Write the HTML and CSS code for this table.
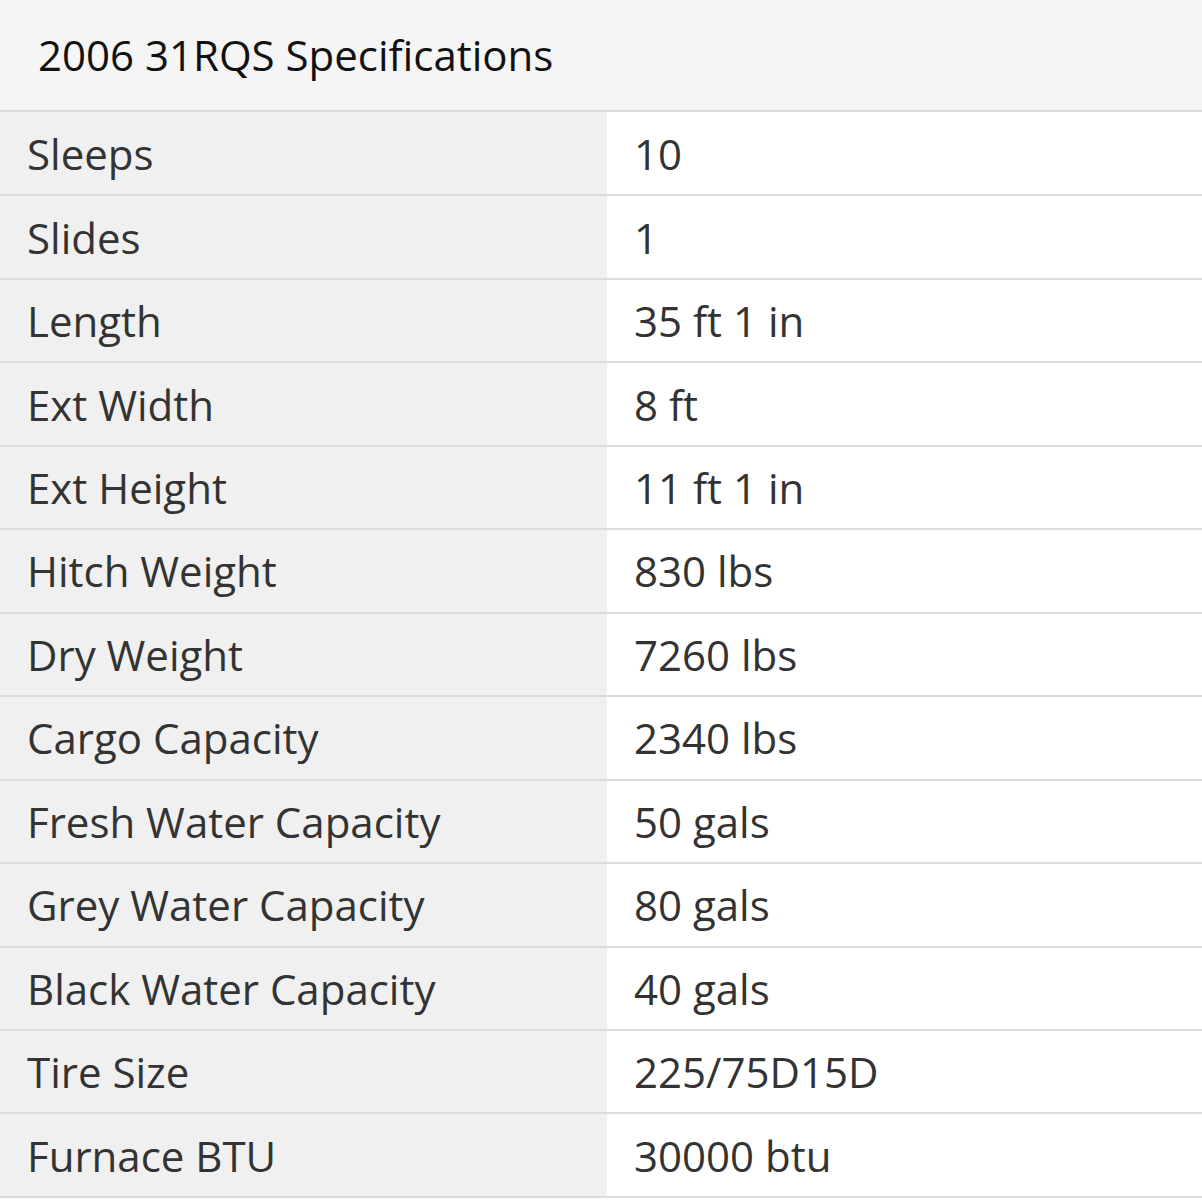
FILE: index.html
```html
<!DOCTYPE html>
<html>
<head>
<meta charset="utf-8">
<link rel="stylesheet" href="styles.css">
</head>
<body>
<div class="specs">
  <div class="specs-title">2006 31RQS Specifications</div>
  <table class="specs-table">
    <tr><td class="label">Sleeps</td><td class="value">10</td></tr>
    <tr><td class="label">Slides</td><td class="value">1</td></tr>
    <tr><td class="label">Length</td><td class="value">35 ft 1 in</td></tr>
    <tr><td class="label">Ext Width</td><td class="value">8 ft</td></tr>
    <tr><td class="label">Ext Height</td><td class="value">11 ft 1 in</td></tr>
    <tr><td class="label">Hitch Weight</td><td class="value">830 lbs</td></tr>
    <tr><td class="label">Dry Weight</td><td class="value">7260 lbs</td></tr>
    <tr><td class="label">Cargo Capacity</td><td class="value">2340 lbs</td></tr>
    <tr><td class="label">Fresh Water Capacity</td><td class="value">50 gals</td></tr>
    <tr><td class="label">Grey Water Capacity</td><td class="value">80 gals</td></tr>
    <tr><td class="label">Black Water Capacity</td><td class="value">40 gals</td></tr>
    <tr><td class="label">Tire Size</td><td class="value">225/75D15D</td></tr>
    <tr><td class="label">Furnace BTU</td><td class="value">30000 btu</td></tr>
  </table>
</div>
</body>
</html>
```
FILE: styles.css
```css
html, body {
  margin: 0;
  padding: 0;
  background: #ffffff;
}
.specs {
  font-family: "Open Sans", sans-serif;
  width: 1202px;
}
.specs-title {
  height: 112px;
  box-sizing: border-box;
  padding-left: 38px;
  padding-bottom: 2px;
  display: flex;
  align-items: center;
  font-size: 42px;
  color: #111;
  background: #f5f5f5;
  border-bottom: 2px solid #dcdcdc;
}
.specs-table {
  width: 100%;
  border-collapse: collapse;
  font-size: 42px;
  color: #333;
}
.specs-table td {
  height: 83.46px;
  padding: 0;
  border-bottom: 2px solid #dcdcdc;
  vertical-align: middle;
  box-sizing: border-box;
}
.label {
  width: 607px;
  padding-left: 27px !important;
  background: #f0f0f0;
}
.value {
  padding-left: 27px !important;
  background: #ffffff;
}
```
